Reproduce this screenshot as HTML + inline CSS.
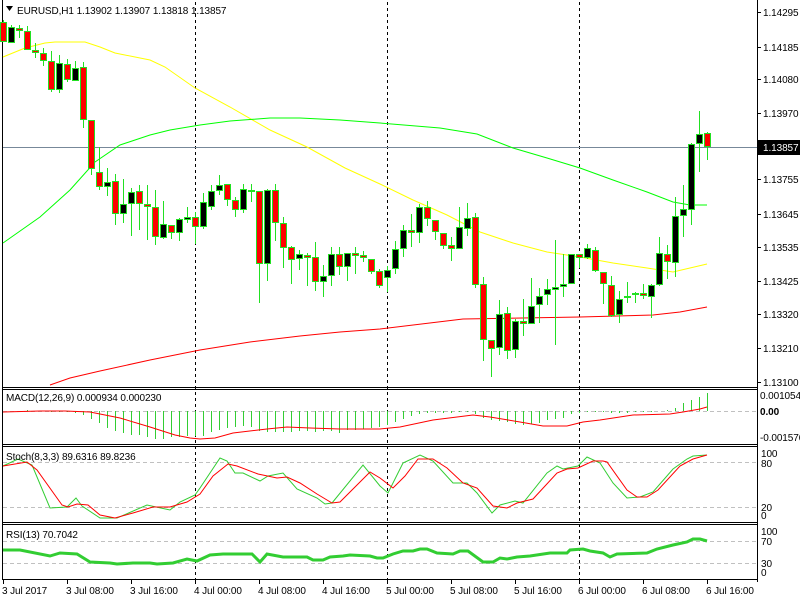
<!DOCTYPE html>
<html><head><meta charset="utf-8"><style>
html,body{margin:0;padding:0;background:#fff;width:800px;height:600px;overflow:hidden}
svg{display:block}
text{font-family:"Liberation Sans",sans-serif;font-size:10px;fill:#000;letter-spacing:-0.1px}
</style></head><body>
<svg id="s" width="800" height="600" viewBox="0 0 800 600" xmlns="http://www.w3.org/2000/svg">
<g shape-rendering="crispEdges" stroke="#000" fill="none">
<line x1="2.5" y1="0" x2="2.5" y2="579"/>
<line x1="757.5" y1="0" x2="757.5" y2="582"/>
<line x1="2" y1="387.5" x2="758" y2="387.5"/>
<line x1="2" y1="389.5" x2="758" y2="389.5"/>
<line x1="2" y1="444.5" x2="758" y2="444.5"/>
<line x1="2" y1="446.5" x2="758" y2="446.5"/>
<line x1="2" y1="522.5" x2="758" y2="522.5"/>
<line x1="2" y1="524.5" x2="758" y2="524.5"/>
<line x1="2" y1="579.5" x2="758" y2="579.5"/>
</g>
<g shape-rendering="crispEdges" stroke="#c0c0c0" stroke-dasharray="4,3">
<line x1="3" y1="411.5" x2="757" y2="411.5"/>
<line x1="3" y1="462.5" x2="757" y2="462.5"/>
<line x1="3" y1="507.5" x2="757" y2="507.5"/>
<line x1="3" y1="541.5" x2="757" y2="541.5"/>
<line x1="3" y1="563.5" x2="757" y2="563.5"/>
</g>
<g shape-rendering="crispEdges" stroke="#000" stroke-dasharray="3,3">
<line x1="195.5" y1="2" x2="195.5" y2="579"/>
<line x1="387.5" y1="2" x2="387.5" y2="579"/>
<line x1="579.5" y1="2" x2="579.5" y2="579"/>
</g>
<line x1="3" y1="147.5" x2="757" y2="147.5" stroke="#778899" shape-rendering="crispEdges"/>
<g id="ind"></g>
<g id="cd"></g>
<polygon points="6,6 13,6 9.5,11" fill="#000"/>
<text x="17" y="14">EURUSD,H1  1.13902 1.13907 1.13818 1.13857</text>
<text x="6" y="401">MACD(12,26,9) 0.000934 0.000230</text>
<text x="6" y="460">Stoch(8,3,3) 89.6316 89.8236</text>
<text x="6" y="538">RSI(13) 70.7042</text>
<g shape-rendering="crispEdges" stroke="#000">
<line x1="757" y1="12.5" x2="761" y2="12.5"/><line x1="757" y1="47.5" x2="761" y2="47.5"/>
<line x1="757" y1="79.5" x2="761" y2="79.5"/><line x1="757" y1="113.5" x2="761" y2="113.5"/>
<line x1="757" y1="179.5" x2="761" y2="179.5"/><line x1="757" y1="214.5" x2="761" y2="214.5"/>
<line x1="757" y1="247.5" x2="761" y2="247.5"/><line x1="757" y1="281.5" x2="761" y2="281.5"/>
<line x1="757" y1="314.5" x2="761" y2="314.5"/><line x1="757" y1="348.5" x2="761" y2="348.5"/>
<line x1="757" y1="382.5" x2="761" y2="382.5"/>
<line x1="3.5" y1="579" x2="3.5" y2="584"/><line x1="67.5" y1="579" x2="67.5" y2="584"/>
<line x1="131.5" y1="579" x2="131.5" y2="584"/><line x1="195.5" y1="579" x2="195.5" y2="584"/>
<line x1="259.5" y1="579" x2="259.5" y2="584"/><line x1="323.5" y1="579" x2="323.5" y2="584"/>
<line x1="387.5" y1="579" x2="387.5" y2="584"/><line x1="451.5" y1="579" x2="451.5" y2="584"/>
<line x1="515.5" y1="579" x2="515.5" y2="584"/><line x1="579.5" y1="579" x2="579.5" y2="584"/>
<line x1="643.5" y1="579" x2="643.5" y2="584"/><line x1="707.5" y1="579" x2="707.5" y2="584"/>
</g>
<g>
<text x="763" y="16">1.14295</text><text x="763" y="51">1.14185</text>
<text x="763" y="83">1.14080</text><text x="763" y="117">1.13970</text>
<rect x="758" y="140" width="42" height="15" fill="#000"/>
<text x="763" y="151" style="fill:#fff">1.13857</text>
<text x="763" y="183">1.13755</text><text x="763" y="218">1.13645</text>
<text x="763" y="251">1.13535</text><text x="763" y="285">1.13425</text>
<text x="763" y="318">1.13320</text><text x="763" y="352">1.13210</text>
<text x="763" y="386">1.13100</text>
<text x="760" y="399">0.001054</text>
<text x="760" y="415" style="font-weight:bold">0.00</text>
<text x="760" y="441">-0.001576</text>
<text x="761" y="457">100</text><text x="761" y="467">80</text>
<text x="761" y="511">20</text><text x="761" y="519">0</text>
<text x="761" y="535">100</text><text x="761" y="545">70</text>
<text x="761" y="567">30</text><text x="761" y="576">0</text>
<text x="2" y="594">3 Jul 2017</text><text x="66" y="594">3 Jul 08:00</text>
<text x="130" y="594">3 Jul 16:00</text><text x="194" y="594">4 Jul 00:00</text>
<text x="258" y="594">4 Jul 08:00</text><text x="322" y="594">4 Jul 16:00</text>
<text x="386" y="594">5 Jul 00:00</text><text x="450" y="594">5 Jul 08:00</text>
<text x="514" y="594">5 Jul 16:00</text><text x="578" y="594">6 Jul 00:00</text>
<text x="642" y="594">6 Jul 08:00</text><text x="706" y="594">6 Jul 16:00</text>
</g>
</svg>
<script>
var NS="http://www.w3.org/2000/svg";
function el(p,t,a){var e=document.createElementNS(NS,t);for(var k in a)e.setAttribute(k,a[k]);p.appendChild(e);return e;}
var ind=document.getElementById('ind'),cd=document.getElementById('cd');
function pl(pts,c,w){el(ind,'polyline',{points:pts,fill:'none',stroke:c,'stroke-width':w||1});}
pl("3,57 25,48 45,43 55,42 85,42 100,47 115,53 150,60 165,67 195,88 230,107 270,130 307,147 345,168 380,184 413,200 447,215 480,232 513,243 547,252 580,257 613,263 647,268 673,272 707,264","#ffff00");
pl("3,243 40,217 70,190 95,162 120,145 150,135 170,130 200,125 230,121 270,118 300,118 340,120 380,123 440,128 477,134 513,148 547,158 580,168 613,180 647,192 673,202 690,205 707,205","#00ff00");
pl("50,385 70,378 100,371 150,360 200,350 250,342 300,336 340,332 380,329 463,319 580,317 653,315 680,312 707,307","#ff0000",1);
var h=[[3,411],[11,411],[19,411],[27,410],[35,411],[43,411],[51,412],[59,412],[67,412],[75,413],[83,415],[91,419],[99,423],[107,428],[115,431],[123,433],[131,435],[139,435],[147,437],[155,439],[163,439],[171,437],[179,437],[187,436],[195,436],[203,436],[211,432],[219,430],[227,428],[235,427],[243,426],[251,427],[259,431],[267,432],[275,432],[283,432],[291,432],[299,431],[307,431],[315,432],[323,431],[331,431],[339,433],[347,430],[355,430],[363,429],[371,428],[379,427],[387,425],[395,422],[403,419],[411,416],[419,414],[427,413],[435,413],[443,413],[451,413],[459,412],[467,412],[475,414],[483,418],[491,420],[499,421],[507,422],[515,424],[523,425],[531,424],[539,423],[547,420],[555,419],[563,418],[571,414],[579,413],[587,412],[595,412],[603,412],[611,413],[619,413],[627,413],[635,412],[643,412],[651,412],[659,411],[667,410],[675,408],[683,403],[691,400],[699,397],[707,393]];
h.forEach(function(b){var y1=Math.min(411,b[1]),y2=Math.max(411,b[1]);if(y2-y1<1)return;el(ind,'rect',{x:b[0],y:y1,width:1,height:y2-y1,fill:'#32cd32','shape-rendering':'crispEdges'});});
pl("3,412 40,411 65,411 90,412 120,418 150,427 175,435 190,438 200,439 215,438 233,433 267,429 287,427 310,428 340,429 380,429 400,427 433,420 473,415 490,417 520,422 543,426 567,426 583,422 600,420 633,415 670,414 683,412 700,409 707,407","#ff0000");
pl("3,466 18,459 32,465 50,508 67,507 76,498 82,506 100,518 117,518 147,505 170,510 180,502 195,495 200,488 220,458 227,461 235,473 243,473 260,481 268,476 283,473 297,489 317,498 325,504 332,503 363,465 380,486 388,493 403,463 420,455 433,461 453,483 467,483 477,493 492,513 500,505 515,501 523,503 547,473 557,466 563,469 578,466 587,457 600,463 613,483 627,498 640,497 653,492 673,469 687,459 693,456 707,455","#32cd32");
pl("3,466 27,462 37,470 62,505 68,507 77,504 88,505 100,515 115,518 133,513 153,507 170,507 187,502 200,494 213,476 228,464 237,466 258,474 277,478 287,477 300,483 317,494 332,503 340,502 370,472 380,478 393,488 405,476 418,459 433,459 447,468 463,483 477,488 493,506 507,508 517,503 533,499 557,473 567,469 578,468 593,461 603,461 607,462 627,490 637,497 647,497 658,490 680,466 693,459 707,455","#ff0000");
pl("3,550 20,550 50,556 60,553 77,554 90,562 110,563 117,564 133,563 150,563 157,564 173,563 187,559 197,561 210,555 223,554 243,554 252,554 260,562 267,554 283,557 307,557 313,560 323,560 330,557 343,556 350,555 370,556 377,558 383,558 393,554 403,551 413,551 420,549 427,549 437,553 453,554 460,551 468,551 483,562 493,562 500,558 507,559 517,557 530,556 550,553 567,553 570,550 583,549 590,551 603,553 610,557 617,554 647,553 657,549 673,545 687,542 693,539 700,539 707,541","#32cd32",3);
var C=[[3,22,42,20,42,'r'],[11,27,43,25,43,'k'],[19,28,31,25,38,'r'],[27,31,50,26,50,'r'],[35,50,53,43,58,'r'],[43,53,61,48,66,'r'],[51,61,90,51,92,'r'],[59,63,90,55,93,'k'],[67,64,80,59,82,'r'],[75,68,81,61,81,'k'],[83,67,120,62,128,'r'],[91,120,169,120,175,'r'],[99,172,187,147,190,'r'],[107,182,187,168,196,'k'],[115,181,214,174,225,'r'],[123,204,214,179,223,'k'],[131,192,204,188,236,'k'],[139,191,204,185,230,'r'],[147,204,207,185,240,'r'],[155,207,237,190,245,'r'],[163,224,238,201,239,'k'],[171,225,233,225,239,'r'],[179,219,233,218,241,'k'],[187,217,220,207,223,'k'],[195,217,227,212,244,'r'],[203,202,227,193,229,'k'],[211,191,207,185,210,'k'],[219,185,191,175,195,'k'],[227,184,200,184,206,'r'],[235,200,210,197,217,'r'],[243,189,210,184,213,'k'],[251,191,191,184,202,'d'],[259,191,264,191,303,'r'],[267,190,264,189,281,'k'],[275,190,223,184,241,'r'],[283,223,248,217,268,'r'],[291,247,260,246,284,'r'],[299,254,259,250,270,'k'],[307,255,258,253,286,'r'],[315,257,282,242,291,'r'],[323,276,282,265,297,'k'],[331,254,276,247,286,'k'],[339,254,267,247,275,'r'],[347,253,267,253,281,'k'],[355,253,255,247,274,'r'],[363,255,258,251,262,'r'],[371,259,272,259,274,'r'],[379,271,286,269,288,'r'],[387,270,278,266,292,'k'],[395,249,269,241,274,'k'],[403,230,249,225,257,'k'],[411,230,232,214,247,'r'],[419,207,233,204,243,'k'],[427,207,219,201,226,'r'],[435,220,232,220,240,'r'],[443,233,246,233,249,'r'],[451,245,249,237,261,'r'],[459,227,249,207,249,'k'],[467,218,229,203,236,'k'],[475,217,285,213,288,'r'],[483,284,340,277,361,'r'],[491,340,349,340,377,'r'],[499,314,348,300,355,'k'],[507,313,351,307,359,'r'],[515,321,350,319,358,'k'],[523,321,323,299,336,'r'],[531,306,324,278,324,'k'],[539,296,305,288,323,'k'],[547,289,295,279,305,'k'],[555,287,289,240,345,'k'],[563,284,287,254,297,'k'],[571,254,284,254,284,'k'],[579,254,258,254,268,'r'],[587,248,258,244,259,'k'],[595,250,271,247,272,'r'],[603,272,284,272,304,'r'],[611,285,316,276,317,'r'],[619,299,315,291,323,'k'],[627,297,297,282,303,'d'],[635,294,294,292,303,'d'],[643,293,296,284,299,'r'],[651,285,297,284,318,'k'],[659,253,285,237,286,'k'],[667,254,262,245,279,'r'],[675,216,263,197,277,'k'],[683,209,216,185,237,'k'],[691,144,210,143,225,'k'],[699,134,144,111,172,'k'],[707,133,147,132,160,'r']];
var G='#22e022';
C.forEach(function(c){var x=c[0];
el(cd,'rect',{x:x,y:c[3],width:1,height:Math.max(1,c[4]-c[3]),fill:G,'shape-rendering':'crispEdges'});
if(c[5]=='d'){el(cd,'rect',{x:x-3,y:c[1]-1,width:7,height:2,fill:G,'shape-rendering':'crispEdges'});return;}
var hh=Math.max(3,c[2]-c[1]);
el(cd,'rect',{x:x-3,y:c[1],width:7,height:hh,fill:G,'shape-rendering':'crispEdges'});
el(cd,'rect',{x:x-2,y:c[1]+1,width:5,height:hh-2,fill:c[5]=='r'?'#ff0000':'#000','shape-rendering':'crispEdges'});
});
</script>
</body></html>
